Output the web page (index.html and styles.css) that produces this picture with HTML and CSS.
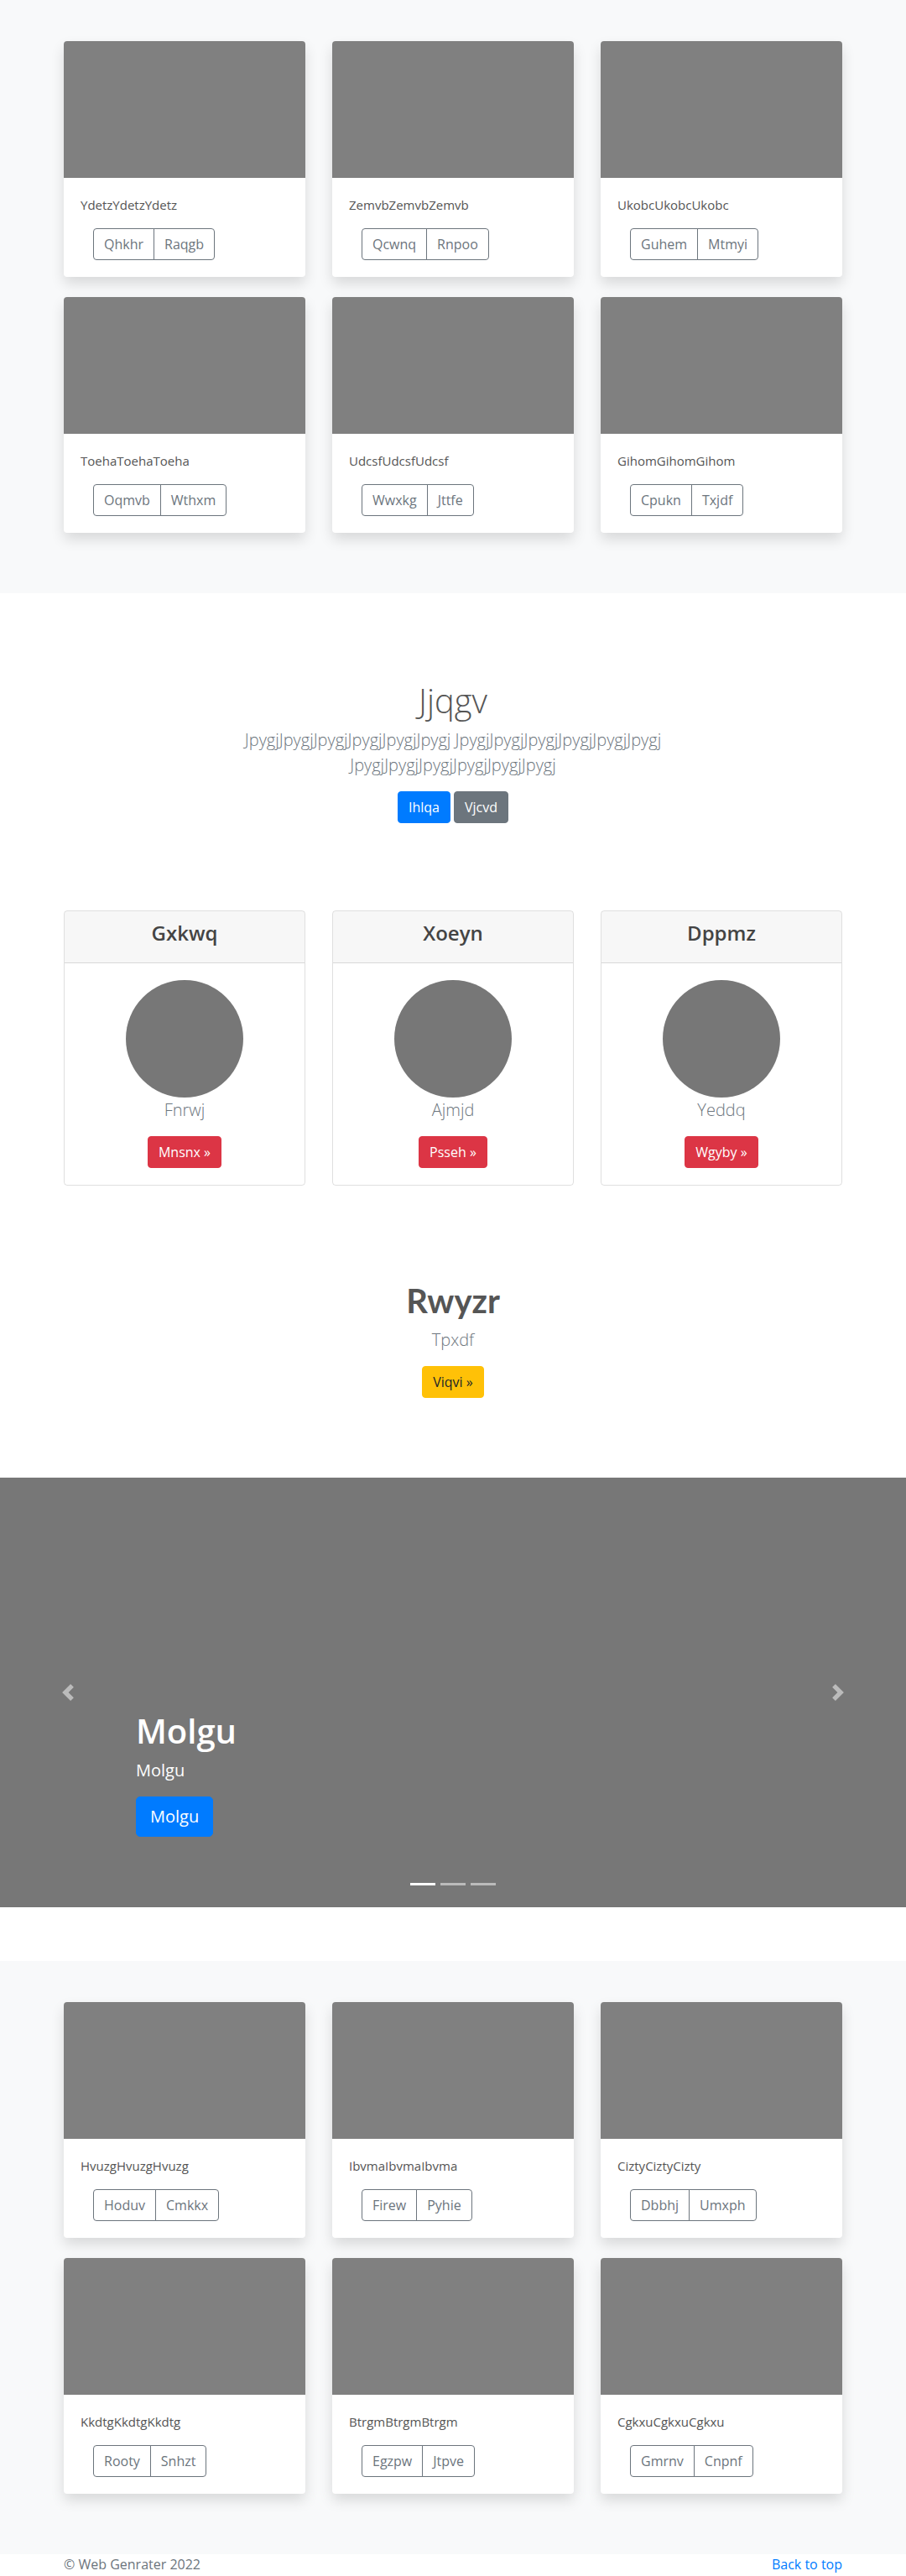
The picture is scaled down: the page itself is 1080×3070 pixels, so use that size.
FILE: index.html
```html
<!DOCTYPE html>
<html lang="en">
<head>
<meta charset="utf-8">
<title>Web Genrater</title>
<link rel="stylesheet" href="styles.css">
</head>
<body>

<section class="album">
  <div class="container">
    <div class="grid">
      <div class="pcard"><div class="pcard-img"></div><div class="pcard-body"><p class="pcard-text">YdetzYdetzYdetz</p><div class="btn-group"><button class="btn-o">Qhkhr</button><button class="btn-o">Raqgb</button></div></div></div>
      <div class="pcard"><div class="pcard-img"></div><div class="pcard-body"><p class="pcard-text">ZemvbZemvbZemvb</p><div class="btn-group"><button class="btn-o">Qcwnq</button><button class="btn-o">Rnpoo</button></div></div></div>
      <div class="pcard"><div class="pcard-img"></div><div class="pcard-body"><p class="pcard-text">UkobcUkobcUkobc</p><div class="btn-group"><button class="btn-o">Guhem</button><button class="btn-o">Mtmyi</button></div></div></div>
      <div class="pcard"><div class="pcard-img"></div><div class="pcard-body"><p class="pcard-text">ToehaToehaToeha</p><div class="btn-group"><button class="btn-o">Oqmvb</button><button class="btn-o">Wthxm</button></div></div></div>
      <div class="pcard"><div class="pcard-img"></div><div class="pcard-body"><p class="pcard-text">UdcsfUdcsfUdcsf</p><div class="btn-group"><button class="btn-o">Wwxkg</button><button class="btn-o">Jttfe</button></div></div></div>
      <div class="pcard"><div class="pcard-img"></div><div class="pcard-body"><p class="pcard-text">GihomGihomGihom</p><div class="btn-group"><button class="btn-o">Cpukn</button><button class="btn-o">Txjdf</button></div></div></div>
    </div>
  </div>
</section>

<section class="hero">
  <h1 class="hero-title">Jjqgv</h1>
  <p class="lead hero-lead">JpygjJpygjJpygjJpygjJpygjJpygj JpygjJpygjJpygjJpygjJpygjJpygj JpygjJpygjJpygjJpygjJpygjJpygj</p>
  <div class="hero-actions">
    <a class="btn btn-primary" href="#">Ihlqa</a>
    <a class="btn btn-secondary" href="#">Vjcvd</a>
  </div>
</section>

<section class="features">
  <div class="container">
    <div class="grid">
      <div class="fcard">
        <div class="fcard-header"><h4 class="fcard-title">Gxkwq</h4></div>
        <div class="fcard-body"><div class="avatar"></div><p class="lead fcard-name">Fnrwj</p><a class="btn btn-danger" href="#">Mnsnx &raquo;</a></div>
      </div>
      <div class="fcard">
        <div class="fcard-header"><h4 class="fcard-title">Xoeyn</h4></div>
        <div class="fcard-body"><div class="avatar"></div><p class="lead fcard-name">Ajmjd</p><a class="btn btn-danger" href="#">Psseh &raquo;</a></div>
      </div>
      <div class="fcard">
        <div class="fcard-header"><h4 class="fcard-title">Dppmz</h4></div>
        <div class="fcard-body"><div class="avatar"></div><p class="lead fcard-name">Yeddq</p><a class="btn btn-danger" href="#">Wgyby &raquo;</a></div>
      </div>
    </div>
  </div>
</section>

<section class="cta">
  <h1 class="cta-title">Rwyzr</h1>
  <p class="lead cta-lead">Tpxdf</p>
  <a class="btn btn-warning" href="#">Viqvi &raquo;</a>
</section>

<section class="carousel">
  <ol class="indicators">
    <li class="active"></li>
    <li></li>
    <li></li>
  </ol>
  <a class="ctrl ctrl-prev" href="#"><svg width="20" height="20" viewBox="0 0 8 8"><path fill="#fff" d="M5.25 0l-4 4 4 4 1.5-1.5L4.25 4l2.5-2.5L5.25 0z"/></svg></a>
  <a class="ctrl ctrl-next" href="#"><svg width="20" height="20" viewBox="0 0 8 8"><path fill="#fff" d="M2.75 0l-1.5 1.5L3.75 4l-2.5 2.5L2.75 8l4-4-4-4z"/></svg></a>
  <div class="caption">
    <h1 class="caption-title">Molgu</h1>
    <p class="caption-text">Molgu</p>
    <p class="caption-action"><a class="btn btn-lg btn-primary" href="#">Molgu</a></p>
  </div>
</section>

<section class="album">
  <div class="container">
    <div class="grid">
      <div class="pcard"><div class="pcard-img"></div><div class="pcard-body"><p class="pcard-text">HvuzgHvuzgHvuzg</p><div class="btn-group"><button class="btn-o">Hoduv</button><button class="btn-o">Cmkkx</button></div></div></div>
      <div class="pcard"><div class="pcard-img"></div><div class="pcard-body"><p class="pcard-text">IbvmaIbvmaIbvma</p><div class="btn-group"><button class="btn-o">Firew</button><button class="btn-o">Pyhie</button></div></div></div>
      <div class="pcard"><div class="pcard-img"></div><div class="pcard-body"><p class="pcard-text">CiztyCiztyCizty</p><div class="btn-group"><button class="btn-o">Dbbhj</button><button class="btn-o">Umxph</button></div></div></div>
      <div class="pcard"><div class="pcard-img"></div><div class="pcard-body"><p class="pcard-text">KkdtgKkdtgKkdtg</p><div class="btn-group"><button class="btn-o">Rooty</button><button class="btn-o">Snhzt</button></div></div></div>
      <div class="pcard"><div class="pcard-img"></div><div class="pcard-body"><p class="pcard-text">BtrgmBtrgmBtrgm</p><div class="btn-group"><button class="btn-o">Egzpw</button><button class="btn-o">Jtpve</button></div></div></div>
      <div class="pcard"><div class="pcard-img"></div><div class="pcard-body"><p class="pcard-text">CgkxuCgkxuCgkxu</p><div class="btn-group"><button class="btn-o">Gmrnv</button><button class="btn-o">Cnpnf</button></div></div></div>
    </div>
  </div>
</section>

<footer class="footer">
  <div class="container footer-inner">
    <p class="footer-copy">&copy; Web Genrater 2022</p>
    <p class="footer-top"><a href="#">Back to top</a></p>
  </div>
</footer>

</body>
</html>
```

FILE: styles.css
```css
* { box-sizing: border-box; }

html, body {
  margin: 0;
  padding: 0;
}

body {
  font-family: "Segoe UI", "Open Sans", "Noto Sans", sans-serif;
  font-size: 16px;
  line-height: 1.5;
  color: #555;
  background: #fff;
}

p { margin: 0; }
h1, h4 { margin: 0; }

.container {
  width: 928px;
  margin: 0 auto;
}

.grid {
  display: grid;
  grid-template-columns: repeat(3, 288px);
  column-gap: 32px;
  row-gap: 24px;
}

/* Album */
.album {
  background: #f8f9fa;
  padding: 49px 0 72px;
}

.pcard {
  background: #fff;
  border-radius: 4px;
  overflow: hidden;
  box-shadow: 0 8px 16px rgba(0, 0, 0, 0.13);
}

.pcard-img {
  height: 163px;
  background: #808080;
}

.pcard-body {
  padding: 20px;
}

.pcard-text {
  font-size: 15px;
  line-height: 24px;
  color: #555;
  margin-bottom: 16px;
}

.btn-group {
  display: inline-flex;
  margin-left: 15px;
}

.btn-o {
  font-family: inherit;
  font-size: 16px;
  line-height: 24px;
  padding: 6px 12px;
  color: #6c757d;
  background: transparent;
  border: 1px solid #6c757d;
  border-radius: 0;
  margin: 0;
}

.btn-o:first-child {
  border-radius: 4px 0 0 4px;
}

.btn-o:last-child {
  border-radius: 0 4px 4px 0;
  margin-left: -1px;
}

/* Generic buttons */
.btn {
  display: inline-block;
  font-size: 16px;
  line-height: 24px;
  padding: 6px 12px;
  border: 1px solid transparent;
  border-radius: 4px;
  text-decoration: none;
  color: #fff;
}

.btn-lg {
  font-size: 20px;
  line-height: 30px;
  padding: 8px 16px;
  border-radius: 5px;
}

.btn-primary { background: #007bff; border-color: #007bff; }
.btn-secondary { background: #6c757d; border-color: #6c757d; }
.btn-danger { background: #dc3545; border-color: #dc3545; }
.btn-warning { background: #ffc107; border-color: #ffc107; color: #212529; }

.lead {
  font-size: 20px;
  line-height: 30px;
  font-weight: 300;
  color: #6c757d;
}

/* Hero */
.hero {
  padding-top: 104px;
  text-align: center;
}

.hero-title {
  font-size: 40px;
  line-height: 48px;
  font-weight: 300;
  color: #555;
  margin-bottom: 8px;
}

.hero-lead {
  max-width: 640px;
  margin: 0 auto 16px;
}

.hero-actions {
  display: flex;
  justify-content: center;
  gap: 4px;
}

/* Features */
.features {
  padding-top: 104px;
}

.fcard {
  border: 1px solid rgba(0, 0, 0, 0.125);
  border-radius: 4px;
  text-align: center;
  overflow: hidden;
}

.fcard-header {
  background: rgba(0, 0, 0, 0.03);
  border-bottom: 1px solid rgba(0, 0, 0, 0.125);
  padding: 12px 20px;
}

.fcard-title {
  font-size: 24px;
  line-height: 28.8px;
  font-weight: 600;
  color: #444;
  margin-bottom: 8px;
}

.fcard-body {
  padding: 20px;
}

.avatar {
  width: 140px;
  height: 140px;
  border-radius: 50%;
  background: #777;
  margin: 0 auto;
}

.fcard-name {
  margin-bottom: 16px;
}

/* CTA */
.cta {
  text-align: center;
  padding-top: 113px;
}

.cta-title {
  font-family: Lato, "Open Sans", sans-serif;
  font-size: 40px;
  line-height: 48px;
  font-weight: 700;
  color: #555;
  margin-bottom: 8px;
}

.cta-lead {
  margin-bottom: 16px;
}

/* Carousel */
.carousel {
  position: relative;
  height: 512px;
  background: #777;
  margin: 95px 0 64px;
  overflow: hidden;
}

.ctrl {
  position: absolute;
  top: 0;
  bottom: 0;
  width: 15%;
  display: flex;
  align-items: center;
  justify-content: center;
  opacity: 0.5;
}

.ctrl-prev { left: 0; }
.ctrl-next { right: 0; }

.ctrl svg { display: block; }

.caption {
  position: absolute;
  left: 15%;
  right: 15%;
  bottom: 48px;
  padding: 20px 0;
  color: #fff;
  text-align: left;
}

.caption-title {
  font-size: 40px;
  line-height: 48px;
  font-weight: 600;
  margin-bottom: 8px;
}

.caption-text {
  font-size: 20px;
  line-height: 30px;
  margin-bottom: 16px;
}

.caption-action {
  margin-bottom: 16px;
}

.indicators {
  position: absolute;
  left: 0;
  right: 0;
  bottom: 0;
  margin: 0 0 16px;
  padding: 0;
  list-style: none;
  display: flex;
  justify-content: center;
}

.indicators li {
  width: 30px;
  height: 3px;
  margin: 0 3px;
  box-sizing: content-box;
  border-top: 10px solid transparent;
  border-bottom: 10px solid transparent;
  background: #fff;
  background-clip: padding-box;
  opacity: 0.5;
}

.indicators li.active { opacity: 1; }

/* Footer */
.footer {
  color: #6c757d;
}

.footer-inner {
  display: flex;
  justify-content: space-between;
}

.footer-inner p {
  margin: 0 0 16px;
}

.footer-top a {
  color: #007bff;
  text-decoration: none;
}
```
